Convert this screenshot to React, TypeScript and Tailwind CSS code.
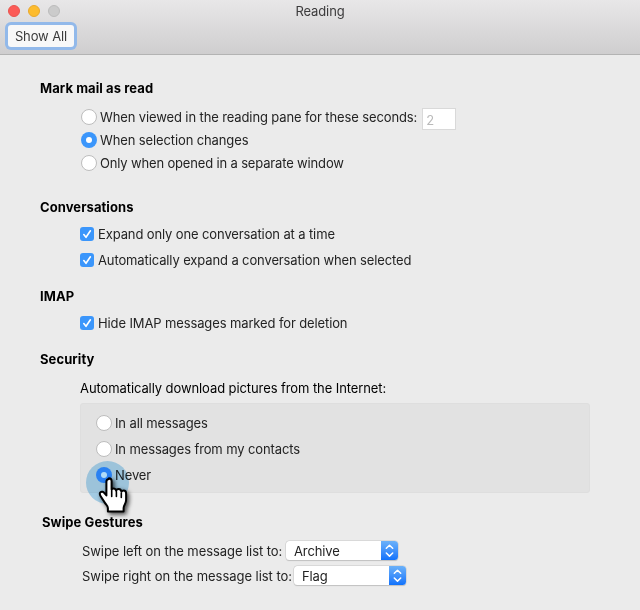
import { useState } from "react";
import type { ReactNode } from "react";

function Heading({ children, className = "" }: { children: ReactNode; className?: string }) {
  return <h2 className={`h-4 font-bold tracking-[0.08px] text-black ${className}`}>{children}</h2>;
}

function Radio({ label, checked, onSelect, className = "" }: { label: string; checked: boolean; onSelect: () => void; className?: string }) {
  return (
    <button role="radio" aria-checked={checked} onClick={onSelect} className={`flex items-center gap-[3px] whitespace-nowrap ${className}`}>
      {checked ? (
        <span className="flex size-4 shrink-0 items-center justify-center rounded-full bg-[#3b96fb]">
          <span className="size-[6px] rounded-full bg-white" />
        </span>
      ) : (
        <span className="size-4 shrink-0 rounded-full border border-[#bdbdbd] bg-white" />
      )}
      <span>{label}</span>
    </button>
  );
}

function Checkbox({ label }: { label: string }) {
  const [on, setOn] = useState(true);
  return (
    <button role="checkbox" aria-checked={on} onClick={() => setOn(!on)} className="flex h-[26px] items-center gap-1 whitespace-nowrap">
      <span className="size-[14px] shrink-0 rounded-[3px] bg-[#3b96fb]">
        {on && (
          <svg viewBox="0 0 14 14" className="size-[14px]" fill="none" stroke="white" strokeWidth="1.6" strokeLinecap="round" strokeLinejoin="round">
            <path d="M3.8 7.6 6 10.3 10.4 3.8" />
          </svg>
        )}
      </span>
      <span>{label}</span>
    </button>
  );
}

function Select({ value }: { value: string }) {
  return (
    <button className="flex h-[19px] w-[112px] overflow-hidden rounded-[3.5px] bg-white shadow-[0_0_0_0.5px_#c8c8c8,0_1px_1px_#bdbdbd]">
      <span className="flex-1 pl-2 text-left leading-5">{value}</span>
      <span className="flex w-[17px] items-center justify-center bg-linear-to-b from-[#6bb1f9] to-[#0f72fb]">
        <svg viewBox="0 0 17 19" className="h-[19px] w-[17px]" fill="none" stroke="white" strokeWidth="1.5" strokeLinecap="round" strokeLinejoin="round">
          <path d="M5.3 7.3 8.5 4.2 11.7 7.3M5.3 12 8.5 15.1 11.7 12" />
        </svg>
      </span>
    </button>
  );
}

function HandCursor() {
  return (
    <>
      <div className="pointer-events-none absolute left-[86px] top-[461px] size-[43px] rounded-full bg-[#b0dcf6] mix-blend-multiply" />
      <div className="pointer-events-none absolute left-[86px] top-[461px]">
        <svg width="50" height="60" viewBox="0 0 50 60" className="overflow-visible drop-shadow-[2px_2px_2px_rgba(0,0,0,0.7)]">
          <path
            d="M23 18c-1.6 0-2.6 1.2-2.6 2.8V34.4l-2-2.3c-1.2-1.4-2.9-1.7-3.9-.8-1 .9-.8 2.3 0 3.6l4.6 7.2c1.2 1.8 2.8 2.8 2.8 4.8v3.7h15.7v-3.7c0-2.4 2.5-4.2 2.5-7.8v-6.6c0-1.9-1-3-2.4-3-1.1 0-1.9.4-2.3 1.2-.3-1.7-1.4-2.6-2.8-2.6-1.3 0-2.2.7-2.5 1.5-.4-1.4-1.5-2.1-2.7-2.1-.9 0-1.4.3-1.8.7v-8.2c0-1.6-1-2.8-2.6-2.8Z"
            fill="white"
            stroke="black"
            strokeWidth="2"
            strokeLinejoin="round"
          />
          <path d="M25.7 29v6.5M30.4 30.5v5M35.3 32v4.5" stroke="black" strokeWidth="1.6" strokeLinecap="round" fill="none" />
        </svg>
      </div>
    </>
  );
}

export default function App() {
  const [mark, setMark] = useState(1);
  const [download, setDownload] = useState(2);
  return (
    <div className="relative h-[610px] w-[640px] overflow-hidden bg-[#ebebeb] font-['Inter','Liberation_Sans',sans-serif] text-[13px] leading-4 tracking-[-0.12px] text-[#232323]">
      <header className="h-[55px] border-b border-[#b3b3b3] bg-linear-to-b from-[#e8e7e8] to-[#cfcecf]">
        <div className="grid h-[22px] grid-cols-3 items-center px-2">
          <div className="flex gap-2">
            <span className="size-3 rounded-full border border-[#e9544f] bg-[#fc5b57]" />
            <span className="size-3 rounded-full border border-[#e9a92c] bg-[#fdbc2e]" />
            <span className="size-3 rounded-full border border-[#bcbcbc] bg-[#cbcbcb]" />
          </div>
          <h1 className="text-center text-[#3c3b3c]">Reading</h1>
        </div>
        <button className="ml-2 mt-[3px] flex h-[22px] w-[66px] items-center justify-center rounded-[3px] bg-[#f8f8f8] text-[#3c3c3c] shadow-[0_0_0_3px_#92b9ea]">
          Show All
        </button>
      </header>

      <main className="pl-10 pt-[25px]">
        <section>
          <Heading>Mark mail as read</Heading>
          <div className="ml-[41px] mt-[10px]">
            <div className="flex h-[23px]">
              <Radio className="h-[22px]" label="When viewed in the reading pane for these seconds:" checked={mark === 0} onSelect={() => setMark(0)} />
              <div className="ml-[5px] mt-[2px] h-[22px] w-[34px] border border-[#d9d9d9] bg-white pl-[3px] leading-[22px] text-[#b9b9b9]">2</div>
            </div>
            <Radio className="h-[23px] pb-px" label="When selection changes" checked={mark === 1} onSelect={() => setMark(1)} />
            <Radio className="h-[23px] pb-px tracking-[-0.16px]" label="Only when opened in a separate window" checked={mark === 2} onSelect={() => setMark(2)} />
          </div>
        </section>

        <section className="mt-6">
          <Heading>Conversations</Heading>
          <div className="ml-10 mt-[6px]">
            <Checkbox label="Expand only one conversation at a time" />
            <Checkbox label="Automatically expand a conversation when selected" />
          </div>
        </section>

        <section className="mt-[15px]">
          <Heading>IMAP</Heading>
          <div className="ml-10 mt-[6px]">
            <Checkbox label="Hide IMAP messages marked for deletion" />
          </div>
        </section>

        <section className="mt-[15px]">
          <Heading>Security</Heading>
          <div className="ml-10 mt-[13px]">
            <p className="h-4 tracking-[-0.09px] text-black">Automatically download pictures from the Internet:</p>
            <div className="mt-[7px] h-[90px] w-[510px] rounded-[3px] border border-[#dedede] bg-[#e2e2e2] pl-[15px] pt-[6px]">
              <Radio className="h-[26px]" label="In all messages" checked={download === 0} onSelect={() => setDownload(0)} />
              <Radio className="h-[26px]" label="In messages from my contacts" checked={download === 1} onSelect={() => setDownload(1)} />
              <Radio className="h-[26px]" label="Never" checked={download === 2} onSelect={() => setDownload(2)} />
            </div>
          </div>
        </section>

        <section className="ml-[2px] mt-[21px]">
          <Heading>Swipe Gestures</Heading>
          <div className="ml-10 mt-[8px]">
            <div className="flex h-[25px] items-center">
              <span className="w-[204px] tracking-[-0.07px]">Swipe left on the message list to:</span>
              <Select value="Archive" />
            </div>
            <div className="flex h-[25px] items-center">
              <span className="w-[212px] tracking-[-0.04px]">Swipe right on the message list to:</span>
              <Select value="Flag" />
            </div>
          </div>
        </section>
      </main>
      <HandCursor />
    </div>
  );
}
